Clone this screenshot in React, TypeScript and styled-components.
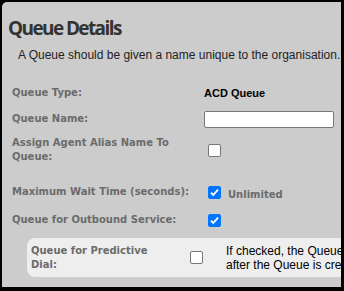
import React from "react";
import styled, { createGlobalStyle } from "styled-components";

const Global = createGlobalStyle`
  html, body {
    margin: 0;
    padding: 0;
    background: #000;
    width: 344px;
    height: 291px;
    overflow: hidden;
  }
`;

const Frame = styled.div`
  padding: 2px 3px 4px 2px;
  height: 291px;
  box-sizing: border-box;
`;

const Panel = styled.div`
  background: #cccccc;
  border-top-left-radius: 5px;
  height: 100%;
  overflow: hidden;
  padding: 0 0 0 10px;
  box-sizing: border-box;
`;

const Title = styled.h1`
  margin: 0 0 0 -4px;
  padding: 14px 0 0 0;
  font-family: "Open Sans", "Liberation Sans", sans-serif;
  font-weight: 700;
  font-size: 19px;
  letter-spacing: -1.6px;
  line-height: 24px;
  color: #333;
`;

const Intro = styled.p`
  margin: 7px 0 0 6px;
  font-family: "Liberation Sans", Arial, sans-serif;
  font-size: 12px;
  line-height: 16px;
  color: #222;
  white-space: nowrap;
`;

const Form = styled.div`
  display: flex;
  flex-direction: column;
  margin-top: 17px;
`;

const Row = styled.div<{ $h: number; $gap?: number }>`
  display: flex;
  align-items: center;
  height: ${(p) => p.$h}px;
  margin-top: ${(p) => p.$gap ?? 0}px;
`;

const Label = styled.div<{ $w?: number }>`
  width: ${(p) => p.$w ?? 192}px;
  flex: none;
  font-family: "DejaVu Sans", Verdana, sans-serif;
  font-weight: 700;
  font-size: 10px;
  line-height: 14px;
  color: #6b6b6b;
`;

const Value = styled.div<{ $w?: number }>`
  display: flex;
  align-items: center;
  gap: 7px;
  width: ${(p) => (p.$w ? `${p.$w}px` : "auto")};
  flex: none;
  font-family: "Liberation Sans", Arial, sans-serif;
  font-weight: 700;
  font-size: 11px;
  color: #000;
`;

const TextInput = styled.input`
  width: 130px;
  height: 17px;
  box-sizing: border-box;
  border: 1px solid #767676;
  border-radius: 2px;
  background: #fff;
  margin: 0;
`;

const Box = styled.span<{ $on?: boolean }>`
  display: inline-flex;
  align-items: center;
  justify-content: center;
  width: 13px;
  height: 13px;
  box-sizing: border-box;
  border-radius: 2px;
  margin-left: 4px;
  border: 1px solid ${(p) => (p.$on ? "#0075ff" : "#767676")};
  background: ${(p) => (p.$on ? "#0075ff" : "#fff")};
`;

const Unlimited = styled.span`
  font-family: "DejaVu Sans", Verdana, sans-serif;
  font-weight: 700;
  font-size: 10px;
  color: #6b6b6b;
  margin-top: 5px;
`;

const SubPanel = styled.div`
  display: flex;
  align-items: center;
  height: 39px;
  margin: 4px -20px 0 15px;
  padding-left: 4px;
  background: #eeeeee;
  border-radius: 8px 0 0 8px;
  white-space: nowrap;
`;

const Note = styled.div`
  font-family: "Liberation Sans", Arial, sans-serif;
  font-size: 12px;
  line-height: 14px;
  color: #000;
`;

const Check = ({ on }: { on?: boolean }) => (
  <Box $on={on}>
    {on && (
      <svg width="11" height="11" viewBox="0 0 11 11">
        <path d="M2 5.8 L4.3 8 L9 2.6" fill="none" stroke="#fff" strokeWidth="1.9" />
      </svg>
    )}
  </Box>
);

export default function App() {
  return (
    <Frame>
      <Global />
      <Panel>
        <Title>Queue Details</Title>
        <Intro>A Queue should be given a name unique to the organisation.</Intro>
        <Form>
          <Row $h={26}>
            <Label>Queue Type:</Label>
            <Value>ACD Queue</Value>
          </Row>
          <Row $h={26}>
            <Label>Queue Name:</Label>
            <Value>
              <TextInput type="text" />
            </Value>
          </Row>
          <Row $h={36}>
            <Label>
              Assign Agent Alias Name To
              <br />
              Queue:
            </Label>
            <Value>
              <Check />
            </Value>
          </Row>
          <Row $h={28} $gap={10}>
            <Label>Maximum Wait Time (seconds):</Label>
            <Value>
              <Check on />
              <Unlimited>Unlimited</Unlimited>
            </Value>
          </Row>
          <Row $h={28}>
            <Label>Queue for Outbound Service:</Label>
            <Value>
              <Check on />
            </Value>
          </Row>
        </Form>
        <SubPanel>
          <Label $w={155}>
            Queue for Predictive
            <br />
            Dial:
          </Label>
          <Value $w={40}>
            <Check />
          </Value>
          <Note>
            If checked, the Queue will be used for predictive dialling
            <br />
            after the Queue is created.
          </Note>
        </SubPanel>
      </Panel>
    </Frame>
  );
}
